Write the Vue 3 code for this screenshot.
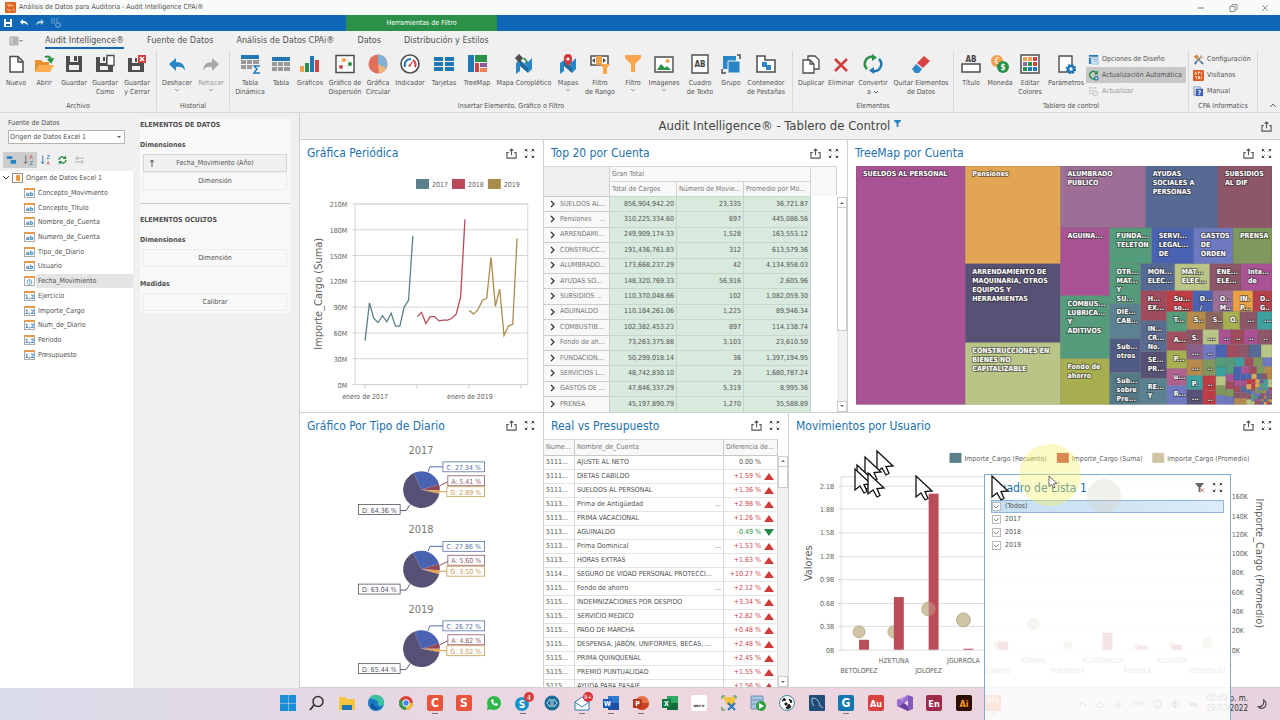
<template>
  <div class="app">
    <header class="titlebar">
      <svg class="logo" viewBox="0 0 12 12" v-html="icons.logo"></svg>
      <span class="app-title">Análisis de Datos para Auditoria - Audit Intelligence CPAi®</span>
      <div class="win-buttons">
        <button v-for="w in ['min', 'restore', 'close']" :key="w" :aria-label="w">
          <svg viewBox="0 0 10 10" v-html="icons[w]"></svg>
        </button>
      </div>
    </header>

    <div class="quickbar">
      <button v-for="q in ['qsave', 'qundo', 'qredo', 'qgrid']" :key="q" :aria-label="q">
        <svg viewBox="0 0 10 10" v-html="icons[q]"></svg>
      </button>
      <span class="context-tab">Herramientas de Filtro</span>
    </div>

    <nav class="tabs">
      <button class="file-tab" aria-label="file">
        <svg viewBox="0 0 14 10" v-html="icons.file"></svg>
      </button>
      <button v-for="(t, i) in tabs" :key="t" class="tab" :class="{ active: i === activeTab }" @click="activeTab = i">{{ t }}</button>
    </nav>

    <section class="ribbon">
      <div v-for="g in groups" :key="g.name" class="group">
        <div class="group-body" :class="g.id">
          <button v-for="b in g.items" :key="b.icon" class="big" :class="{ off: b.off }">
            <svg viewBox="0 0 20 20" v-html="icons[b.icon]"></svg>
            <span>{{ b.text }}<svg v-if="b.inline" class="chev" viewBox="0 0 6 4"><path d="M1 1l2 2 2-2" fill="none" stroke="#666" /></svg></span>
            <svg v-if="b.drop" class="chev" viewBox="0 0 6 4"><path d="M1 1l2 2 2-2" fill="none" stroke="#999" /></svg>
          </button>
          <div v-if="g.small" class="small-list">
            <button v-for="s in g.small" :key="s.text" class="small" :class="{ pressed: s.pressed, off: s.off }">
              <svg viewBox="0 0 12 12" v-html="icons[s.icon]"></svg>{{ s.text }}
            </button>
          </div>
        </div>
        <div class="group-name">{{ g.name }}</div>
      </div>
      <button class="collapse" aria-label="collapse">
        <svg viewBox="0 0 8 6"><path d="M1 5l3-3 3 3" fill="none" stroke="#666" /></svg>
      </button>
    </section>

    <main class="work">
      <aside class="source">
        <label for="origin">Fuente de Datos</label>
        <div class="select-box">
          <select id="origin"><option>Origen de Datos Excel 1</option></select>
          <svg viewBox="0 0 6 4"><path d="M1 1h4L3 3z" fill="#555" /></svg>
        </div>
        <div class="tree-tools">
          <button v-for="(t, i) in ['group', 'az', 'za', 'refresh', 'swap']" :key="t" :class="{ on: i < 2 }" :aria-label="t">
            <svg viewBox="0 0 12 12" v-html="icons[t]"></svg>
          </button>
        </div>
        <div class="tree">
          <ul>
            <li class="root">
              <svg class="exp" viewBox="0 0 8 6"><path d="M1 1l3 3 3-3" fill="none" stroke="#444" /></svg>
              <svg class="field" viewBox="0 0 11 10" v-html="icons.db"></svg>
              <span>Origen de Datos Excel 1</span>
            </li>
            <li v-for="f in fields" :key="f.name" :class="{ selected: f.type === 'date' }">
              <svg class="field" viewBox="0 0 11 10">
                <rect x=".5" y=".5" width="10" height="9" fill="#fff" stroke="#aaa" />
                <rect width="11" height="2" fill="#e59a4c" />
                <g v-if="f.type === 'date'" fill="none" stroke="#4a8dbb" stroke-width=".8"><circle cx="5.5" cy="6" r="2.4" /><path d="M5.5 4.5v1.7h1.3" /></g>
                <text v-else x="5.5" y="8" text-anchor="middle" font-size="6" font-weight="bold" fill="#3484b8">{{ f.type }}</text>
              </svg>
              <span>{{ f.name }}</span>
            </li>
          </ul>
        </div>
      </aside>

      <aside class="bindings">
        <div class="card">
          <h4>ELEMENTOS DE DATOS</h4>
          <h5>Dimensiones</h5>
          <button class="slot filled"><svg viewBox="0 0 6 8"><path d="M3 8V1M1 3l2-2 2 2" fill="none" stroke="#555" /></svg>Fecha_Movimiento (Año)</button>
          <button class="slot">Dimensión</button>
          <hr />
          <h4>ELEMENTOS OCULTOS</h4>
          <h5>Dimensiones</h5>
          <button class="slot">Dimensión</button>
          <h5 class="measures">Medidas</h5>
          <button class="slot">Calibrar</button>
        </div>
      </aside>

      <section class="dashboard">
        <div class="dash-title">
          <h1>Audit Intelligence® - Tablero de Control</h1>
          <svg class="funnel" viewBox="0 0 8 8"><path d="M0 0h8v1L5 4v4H3V4L0 1z" fill="#2a86c4" /></svg>
          <button class="tool" aria-label="export"><svg viewBox="0 0 12 12" v-html="icons.export"></svg></button>
        </div>

        <div class="row top">
          <article class="panel">
            <div class="panel-head">
              <h2>Gráfica Periódica</h2>
              <button v-for="t in tools" :key="t" class="tool" :aria-label="t"><svg viewBox="0 0 12 12" v-html="icons[t]"></svg></button>
            </div>
            <svg class="chart" viewBox="0 0 243 246">
              <g v-for="(s, i) in series" :key="s.year">
                <rect :x="116 + i * 36" y="13" width="13" height="10" :fill="s.color" />
                <text :x="132 + i * 36" y="21">{{ s.year }}</text>
              </g>
              <rect x="55" y="38" width="173" height="181" fill="none" stroke="#d2d2d2" />
              <g v-for="n in 8" :key="n">
                <path :d="`M52 ${lineY((n - 1) * 30)}H228`" stroke="#d6d6d6" />
                <text x="47" :y="lineY((n - 1) * 30) + 3" text-anchor="end">{{ (n - 1) * 30 }}M</text>
              </g>
              <path v-for="n in 4" :key="'t' + n" :d="`M${13 + n * 52} 219v4`" stroke="#ccc" />
              <polyline v-for="s in series" :key="s.color" :points="linePoints(s)" fill="none" :stroke="s.color" stroke-width="1.3" />
              <text x="65" y="233" text-anchor="middle">enero de 2017</text>
              <text x="170" y="233" text-anchor="middle">enero de 2019</text>
              <text class="axis" transform="translate(22 128) rotate(-90)" text-anchor="middle">Importe_Cargo (Suma)</text>
            </svg>
          </article>

          <article class="panel">
            <div class="panel-head">
              <h2>Top 20 por Cuenta</h2>
              <button v-for="t in tools" :key="t" class="tool" :aria-label="t"><svg viewBox="0 0 12 12" v-html="icons[t]"></svg></button>
            </div>
            <div class="grid-wrap">
              <table class="pivot">
                <colgroup><col class="c-name" /><col class="c-num" /><col class="c-num" /><col class="c-num" /><col /></colgroup>
                <thead>
                  <tr><th rowspan="2" class="corner"></th><th colspan="3">Gran Total</th><th rowspan="2"></th></tr>
                  <tr><th>Total de Cargos</th><th>Número de Movie...</th><th>Promedio por Mo...</th></tr>
                </thead>
                <tbody>
                  <tr v-for="r in top20" :key="r[0]">
                    <td class="name"><svg viewBox="0 0 5 8"><path d="M1 1l3 3-3 3" fill="none" stroke="#333" stroke-width="1.3" /></svg>{{ r[0] }}</td>
                    <td class="num">{{ r[1] }}</td>
                    <td class="num">{{ r[2] }}</td>
                    <td class="num">{{ r[3] }}</td>
                    <td></td>
                  </tr>
                </tbody>
              </table>
              <div class="scroll"><i class="up"></i><b class="long"></b><i class="down"></i></div>
            </div>
          </article>

          <article class="panel">
            <div class="panel-head">
              <h2>TreeMap por Cuenta</h2>
              <button v-for="t in tools" :key="t" class="tool" :aria-label="t"><svg viewBox="0 0 12 12" v-html="icons[t]"></svg></button>
            </div>
            <svg class="treemap" viewBox="0 0 415 239" preserveAspectRatio="none">
              <g v-for="(t, i) in tiles" :key="i">
                <rect :x="t[0]" :y="t[1]" :width="t[2]" :height="t[3]" :fill="t[4]" stroke="#333" stroke-opacity=".25" stroke-width=".6" />
                <text v-for="(line, k) in (t[5] ? t[5].split('|') : [])" :key="k" :x="t[0] + (t[3] < 17 ? 5 : 7)" :y="t[1] + 10 + k * 9">{{ line }}</text>
              </g>
            </svg>
          </article>
        </div>

        <div class="row bottom">
          <article class="panel">
            <div class="panel-head">
              <h2>Gráfico Por Tipo de Diario</h2>
              <button v-for="t in tools" :key="t" class="tool" :aria-label="t"><svg viewBox="0 0 12 12" v-html="icons[t]"></svg></button>
            </div>
            <svg class="chart" viewBox="0 0 243 250">
              <g v-for="(p, i) in pies" :key="p.year" :transform="`translate(0 ${i * 80})`">
                <text class="pie-title" x="121" y="15" text-anchor="middle">{{ p.year }}</text>
                <path v-for="s in pieSlices(p)" :key="s.color" :d="s.d" :fill="s.color" />
                <g fill="none">
                  <path d="M128 33l2-5h13" stroke="#5470a8" />
                  <path d="M140 47l8-4" stroke="#8e5669" />
                  <path d="M140 53h7" stroke="#c79a52" />
                  <path d="M110 66l-4 6h-7" stroke="#575175" />
                </g>
                <g v-for="l in pieLabels" :key="l.key">
                  <rect :x="l.x" :y="l.y" :width="l.w" height="10" fill="#fff" :stroke="l.color" stroke-width=".8" />
                  <text :x="l.x + l.w / 2" :y="l.y + 8" text-anchor="middle" :fill="l.color">{{ l.key }}: {{ p[l.key] }} %</text>
                </g>
              </g>
            </svg>
          </article>

          <article class="panel">
            <div class="panel-head">
              <h2>Real vs Presupuesto</h2>
              <button v-for="t in tools" :key="t" class="tool" :aria-label="t"><svg viewBox="0 0 12 12" v-html="icons[t]"></svg></button>
            </div>
            <div class="grid-wrap">
              <table class="budget">
                <colgroup><col class="c-id" /><col /><col class="c-diff" /></colgroup>
                <thead><tr><th>Nume...</th><th>Nombre_de_Cuenta</th><th>Diferencia de...</th></tr></thead>
                <tbody>
                  <tr v-for="r in budget" :key="r[1]">
                    <td>{{ r[0] }}...</td>
                    <td><div class="cell"><span>{{ r[1] }}</span><span v-if="r[3]">...</span></div></td>
                    <td class="diff" :class="r[2][0] === '+' ? 'bad' : r[2][0] === '-' ? 'good' : ''">
                      {{ r[2] }} %<i></i>
                    </td>
                  </tr>
                </tbody>
              </table>
              <div class="scroll from-head"><i class="up"></i><b></b><i class="down"></i></div>
            </div>
          </article>

          <article class="panel">
            <div class="panel-head">
              <h2>Movimientos por Usuario</h2>
              <button v-for="t in tools" :key="t" class="tool" :aria-label="t"><svg viewBox="0 0 12 12" v-html="icons[t]"></svg></button>
            </div>
            <svg class="chart" viewBox="0 0 491 250">
              <g v-for="l in comboLegend" :key="l.text">
                <rect :x="l.x" y="14" width="12" height="10" :fill="l.color" />
                <text :x="l.x + 15" y="22">{{ l.text }}</text>
              </g>
              <path d="M51 38H442M51 38V212" stroke="#ddd" fill="none" />
              <g v-for="(v, i) in ['0B', '0.3B', '0.6B', '0.9B', '1.2B', '1.5B', '1.8B', '2.1B']" :key="v">
                <path :d="`M48 ${212 - Math.round(i * 23.6)}.5H442`" stroke="#ddd" />
                <text x="44" :y="215 - Math.round(i * 23.6)" text-anchor="end">{{ v }}</text>
              </g>
              <text v-for="n in 9" :key="n" x="444" :y="234 - Math.round(n * 19.3)">{{ (n - 1) * 20 }}K</text>
              <g v-for="(u, i) in users" :key="u.name">
                <circle :cx="69 + i * 35" :cy="u.cy" :r="u.r" fill="#cfc4a3" stroke="#b8ad8c" />
                <rect :x="69 + i * 35" :y="212 - u.bar" width="10" :height="u.bar" fill="#ba4d5a" />
                <text :x="69 + i * 35" :y="i % 2 ? 225 : 235" text-anchor="middle">{{ u.name }}</text>
              </g>
              <circle cx="139" cy="171" r="7" fill="#cfc4a3" fill-opacity=".35" />
              <text class="axis" transform="translate(22 125) rotate(-90)" text-anchor="middle">Valores</text>
              <text class="axis" transform="translate(468 125) rotate(90)" text-anchor="middle">Importe_Cargo (Promedio)</text>
            </svg>
          </article>
        </div>
      </section>
    </main>

    <footer class="taskbar">
      <div class="apps">
        <button v-for="(a, i) in apps" :key="i" :class="{ running: a[3] }" :aria-label="'app ' + i">
          <svg viewBox="0 0 16 16">
            <g v-if="icons[a[0]]" v-html="icons[a[0]]"></g>
            <template v-else>
              <rect width="16" height="16" rx="2" :fill="a[1]" />
              <text x="8" y="12" text-anchor="middle" :font-size="a[0].length > 2 ? 4 : a[0].length > 1 ? 9 : 12" font-weight="bold" :fill="a[2]">{{ a[0] }}</text>
            </template>
          </svg>
        </button>
      </div>
      <div class="tray">
        <svg viewBox="0 0 8 8"><path d="M1 5l3-3 3 3" fill="none" stroke="#555" /></svg>
        <svg viewBox="0 0 10 8"><path d="M3 7a2 2 0 010-4 3 3 0 015 1 1.5 1.5 0 010 3z" fill="none" stroke="#555" /></svg>
        <svg viewBox="0 0 8 10"><rect x="3" y="1" width="2" height="5" rx="1" fill="none" stroke="#555" /><path d="M1 4a3 3 0 006 0M4 7v2" fill="none" stroke="#555" /></svg>
        <span>ESP</span>
        <svg viewBox="0 0 10 10"><path d="M1 1h8v6H1zM3 9h4" fill="none" stroke="#555" /></svg>
        <svg viewBox="0 0 8 8"><path d="M1 3h1l2-2v6L2 5H1zM6 2q2 2 0 4" fill="none" stroke="#555" /></svg>
        <svg viewBox="0 0 10 8"><path d="M1 2h8v4H1z" fill="#666" /></svg>
        <time>02:49 p. m.<br />29/03/2022</time>
        <svg class="moon" viewBox="0 0 10 10"><path d="M6 1a4 4 0 11-5 6q6 0 5-6z" fill="none" stroke="#444" /></svg>
      </div>
    </footer>

    <!-- floating list box that is being dragged over the dashboard -->
    <div class="listbox">
      <div class="panel-head">
        <h2>Cuadro de Lista 1</h2>
        <button class="tool" aria-label="clear"><svg viewBox="0 0 12 12" v-html="icons.clear"></svg></button>
        <button class="tool" aria-label="max"><svg viewBox="0 0 12 12" v-html="icons.max"></svg></button>
      </div>
      <label v-for="(o, i) in options" :key="o" :class="{ current: i === 0 }">
        <input v-model="checked" type="checkbox" :value="o" /><span>{{ o }}</span>
      </label>
    </div>

    <svg class="pointer-trail" viewBox="0 0 240 90">
      <circle cx="200" cy="30" r="31" fill="#f7f36b" fill-opacity=".4" />
      <circle cx="254" cy="51" r="17" fill="#cfc8b4" fill-opacity=".28" />
      <path v-for="c in cursors" :key="c.join()" :transform="`translate(${c[0]} ${c[1]})`" d="M0 0v21l5-4 4 7 3-1.5-3-7 7-.5z" fill="#fff" stroke="#111" stroke-width="1.3" />
      <path transform="translate(199 31) scale(.5)" d="M0 0v21l5-4 4 7 3-1.5-3-7 7-.5z" fill="#fff" stroke="#444" stroke-width="1.6" />
    </svg>
  </div>
</template>

<script setup>
import { ref } from 'vue';

const activeTab = ref(0);
const tabs = ['Audit Intelligence®', 'Fuente de Datos', 'Análisis de Datos CPAi®', 'Datos', 'Distribución y Estilos'];
const tools = ['export', 'max'];

const options = ['(Todos)', '2017', '2018', '2019'];
const checked = ref([...options]);

const table = '<path d="M1 1h18v4H1z" fill="#2178b5"/><path d="M1 6h5v4H1zM7 6h5v4H7zM13 6h6v4h-6zM1 11h5v4H1zM7 11h5v4H7z" fill="#9a9a9a"/>';
const map = '<path d="M2 9l4-3v11l-4 3zM14 8l4-4v11l-4 4z" fill="#2a86c4"/><path d="M6 6l8 7v6L6 12z" fill="#1c6a9e"/><path d="M10 9l4-2v6z" fill="#2a86c4"/>';
const floppy = '<path d="M2 2h16v16H2z" fill="#4d4d4d"/><path d="M6 2h8v6H6zM5 11h10v5H5z" fill="#f0f0f0"/><path d="M10 2h3v5h-3z" fill="#4d4d4d"/>';
const undo = 'M2 10l7-6v4q9 0 9 9-2-5-9-4v4z';

const icons = {
  logo: '<rect width="12" height="12" rx="1" fill="#e0641f"/><path d="M2 3h2v2M5 5V3h2v2M9 3v2M2 8h2v2M6 8v2M8 8h2v2" fill="none" stroke="#ffe1c8" stroke-width=".8"/>',
  min: '<path d="M2 5h6" stroke="#777"/>',
  restore: '<path d="M2 3.5h5v5H2zM4 3V1.5h5v5H7.5" fill="none" stroke="#777" stroke-width=".8"/>',
  close: '<path d="M2 2l6 6M8 2l-6 6" stroke="#777" stroke-width=".8"/>',
  qsave: '<path d="M1 1h8v8H1z" fill="#fff"/><path d="M3 1h4v3H3zM3 6h4v2H3z" fill="#0f67b5"/>',
  qundo: '<path d="M1 4l3-3v2q5 0 5 5-1-3-5-3v2z" fill="#fff"/>',
  qredo: '<path d="M9 4L6 1v2q-5 0-5 5 1-3 5-3v2z" fill="#b6d3ea"/>',
  qgrid: '<path d="M0 1h8M0 3h7M0 5h4" stroke="#87b5da" stroke-dasharray="1.5 1"/><circle cx="7" cy="7" r="2.3" fill="none" stroke="#87b5da"/>',
  file: '<path d="M1 1h8v8H1z" fill="#ccc" stroke="#999" stroke-width=".8"/><path d="M4 3h4M4 5h4M4 7h4" stroke="#888" stroke-width=".7"/><path d="M10 4h4l-2 2z" fill="#888"/>',
  nuevo: '<path d="M4 2.5h8l5 5V18H4zM12 2.5V8h5" fill="#fff" stroke="#4d4d4d" stroke-width="1.5"/>',
  abrir: '<path d="M1 6h6l2 2h6v3H5l-4 7z" fill="#e8902f"/><path d="M5 11h15l-4 7H1z" fill="#fbae52"/><path d="M11 3q5-2 6 3M14 5l3 3 2-4" fill="none" stroke="#2b9149" stroke-width="2"/>',
  guardar: floppy,
  como: '<path d="M1 3h17v15H1z" fill="#4d4d4d"/><path d="M5 3h6v6H5zM5 12h8v4H5z" fill="#f0f0f0"/><path d="M8 3h2v4H8z" fill="#4d4d4d"/><path d="M12 1.5h7v10h-7z" fill="#fff" stroke="#4d4d4d" stroke-width="1.3"/>',
  cerrar: '<path d="M1 4h16v14H1z" fill="#4d4d4d"/><path d="M5 4h6v5H5zM5 12h8v4H5z" fill="#f0f0f0"/><path d="M8 4h2v4H8z" fill="#4d4d4d"/><path d="M11 1h8v8h-8z" fill="#d33b3b"/><path d="M13 3l4 4M17 3l-4 4" stroke="#fff" stroke-width="1.5"/>',
  deshacer: `<path d="${undo}" fill="#2a86c4"/>`,
  rehacer: `<path d="${undo}" fill="#a8a8a8" transform="matrix(-1 0 0 1 20 0)"/>`,
  dinamica: table + '<path d="M20 12h-6l3 3-3 4h6" fill="none" stroke="#2178b5" stroke-width="1.5"/>',
  tabla: '<path d="M1 3h18v4H1z" fill="#2178b5"/><path d="M1 8h5v4H1zM7 8h5v4H7zM13 8h6v4h-6zM1 13h5v4H1zM7 13h5v4H7zM13 13h6v4h-6z" fill="#9a9a9a"/>',
  graficos: '<path d="M0 12h4v6H0z" fill="#f0a04a"/><path d="M5 9h4v9H5z" fill="#2b9149"/><path d="M10 2h4v16h-4z" fill="#2178b5"/><path d="M15 6h4v12h-4z" fill="#d04545"/>',
  dispersion: '<path d="M1 1.5h18v17H1z" fill="#fff" stroke="#4d4d4d" stroke-width="1.5"/><path d="M1 7h18M1 12h18M7 2v16M13 2v16" stroke="#ccc" stroke-width=".6"/><circle cx="9" cy="6" r="2" fill="#f0a04a"/><circle cx="6" cy="13" r="2" fill="#d04545"/><circle cx="15" cy="10" r="2" fill="#2b9149"/>',
  pie: '<circle cx="10" cy="10" r="9.5" fill="#e2705e"/><path d="M10 10V.5a9.5 9.5 0 018 14z" fill="#7fb3d8"/><path d="M10 10l8 4a9 9 0 01-7 5z" fill="#f0b878"/>',
  indicador: '<circle cx="10" cy="10" r="9" fill="#fff" stroke="#4d4d4d" stroke-width="1.6"/><path d="M5 13a6 6 0 016-8" fill="none" stroke="#2178b5" stroke-width="2"/><path d="M13 6a6 6 0 012 7" fill="none" stroke="#d33b3b" stroke-width="2"/><path d="M8 12l6-6-4 7z" fill="#d33b3b"/>',
  tarjetas: '<path d="M0 3h9v4H0zM11 3h9v4h-9zM0 8h9v4H0zM11 8h9v4h-9zM0 13h9v4H0zM11 13h9v4h-9z" fill="#2178b5"/>',
  treemap: '<path d="M1 1h6v17H1z" fill="#2178b5"/><path d="M8 1h12v7H8z" fill="#2b9149"/><path d="M8 9h4v9H8z" fill="#d04545"/><path d="M13 9h7v4h-7z" fill="#8a5a9a"/><path d="M13 14h7v4h-7z" fill="#f0805a"/>',
  coropletico: map + '<path d="M5 0l4 4-4 5-4-5z" fill="#4d4d4d"/><path d="M9 5q3-1 4 4" fill="none" stroke="#2b9149" stroke-width="1.5"/>',
  mapas: map + '<path d="M10 12q-5-5-4-8a4 4 0 018 0q1 3-4 8z" fill="#d33b3b"/><circle cx="10" cy="5" r="1.6" fill="#fff"/>',
  rango: '<path d="M1 2h17v9H1z" fill="#fff" stroke="#4d4d4d" stroke-width="1.5"/><path d="M6 2h6v9H6z" fill="#f0a04a"/><path d="M5 4v5L2 6.5zM13 4v5l3-2.5z" fill="#4d4d4d"/><path d="M10 10h10l-3 4v6h-4v-6z" fill="#fba64a"/>',
  filtro: '<path d="M2 1h16v3l-6 6v8H8v-8L2 4z" fill="#fba64a"/>',
  imagenes: '<path d="M1 3h18v15H1z" fill="#fff" stroke="#4d4d4d" stroke-width="1.4"/><path d="M3 16l4-6 4 4 2-2 4 4z" fill="#2b9149"/><circle cx="13.5" cy="7" r="2" fill="#f0a04a"/>',
  texto: '<path d="M2 1h16v18H2z" fill="#fff" stroke="#4d4d4d" stroke-width="1.4"/><text x="10" y="13" text-anchor="middle" font-size="8" font-weight="bold" fill="#444">AB</text>',
  grupo: '<path d="M2 2h13v13H2z" fill="#2a86c4"/><path d="M7 7h12v12H7z" fill="#2a86c4" stroke="#f0f0f0"/><path d="M16 1h3v4M1 15v4h4" fill="none" stroke="#4d4d4d" stroke-width="1.5"/>',
  contenedor: '<path d="M1 2h8v4h10v12H1z" fill="#fff" stroke="#4d4d4d" stroke-width="1.5"/><path d="M6 8h5v5H6zM10 11h5v5h-5z" fill="#2a86c4"/>',
  duplicar: '<path d="M7 2h7l4 4v9H7z" fill="#fff" stroke="#4d4d4d" stroke-width="1.3"/><path d="M2 6h7l4 4v9H2zM9 6v4h4" fill="#fff" stroke="#4d4d4d" stroke-width="1.3"/>',
  eliminar: '<path d="M4 5l12 12M16 5L4 17" stroke="#d33b3b" stroke-width="2.5"/>',
  convertir: '<path d="M4 15a7 7 0 016-12" fill="none" stroke="#2b9149" stroke-width="2.5"/><path d="M9 0l5 3.5L9 7z" fill="#2b9149"/><path d="M16 5a7 7 0 01-6 12" fill="none" stroke="#2178b5" stroke-width="2.5"/><path d="M11 20l-5-3.5 5-3.5z" fill="#2178b5"/>',
  quitar: '<path d="M13 2l6 5-7 7-6-5z" fill="#d84444"/><path d="M5 10l6 5-3 4H4l-3-4z" fill="#2a86c4"/>',
  titulo: '<text x="10" y="8" text-anchor="middle" font-size="8" font-weight="bold" fill="#444">AB</text><path d="M1 10h18v8H1z" fill="#fff" stroke="#4d4d4d" stroke-width="1.5"/>',
  moneda: '<circle cx="7" cy="7" r="6" fill="#f0a04a"/><text x="7" y="10" text-anchor="middle" font-size="8" fill="#fff">€</text><circle cx="13" cy="13" r="6" fill="#2b9149"/><text x="13" y="16" text-anchor="middle" font-size="8" font-weight="bold" fill="#fff">$</text>',
  colores: '<path d="M1 1h18v18H1z" fill="#fff" stroke="#4d4d4d" stroke-width="1.5"/><path d="M3 3h4v4H3zM8 3h4v4H8z" fill="#f0a04a"/><path d="M13 3h4v4h-4z" fill="#d04545"/><path d="M3 8h4v4H3z" fill="#8a6aa0"/><path d="M8 8h4v4H8zM3 13h4v4H3z" fill="#2b9149"/><path d="M13 8h4v4h-4z" fill="#d04545"/><path d="M8 13h4v4H8zM13 13h4v4h-4z" fill="#2178b5"/>',
  parametros: '<path d="M3 2h13v16H3z" fill="#fff" stroke="#4d4d4d" stroke-width="1.4"/><circle cx="15" cy="15" r="3" fill="#f0f0f0" stroke="#2178b5" stroke-width="2.5"/><circle cx="15" cy="15" r="4.5" fill="none" stroke="#2178b5" stroke-width="1.5" stroke-dasharray="2 1.5"/>',
  diseno: '<path d="M1 1h10v2H1zM1 4h2v7H1z" fill="#2178b5"/><path d="M4 4h7v7H4z" fill="#dcebf5" stroke="#7aa9cc" stroke-width=".7"/><path d="M6 6h4M6 8h4" stroke="#7aa9cc"/>',
  auto: '<path d="M9 3a4 4 0 10-1 6M10 1v3H7" fill="none" stroke="#2b9149" stroke-width="1.6"/><circle cx="9" cy="9" r="2" fill="none" stroke="#2178b5" stroke-width="1.2"/>',
  actualizar: '<path d="M1 2h9M1 5h6M1 8h4" stroke="#bbb" stroke-width="1.5" stroke-dasharray="2 1"/><circle cx="8" cy="8" r="2.5" fill="none" stroke="#bbb"/>',
  config: '<path d="M2 10l7-7M3 3l7 7" stroke="#888" stroke-width="1.8"/><path d="M1 3l3-2 2 2-2 2zM8 1l3 3" fill="#e08a3f" stroke="#e08a3f"/><path d="M2 11l2-2M9 9l2 2" stroke="#4477aa" stroke-width="1.8"/>',
  visitanos: '<rect width="12" height="12" rx="1" fill="#de5b22"/><path d="M2 5l1-3 1 3M6 5V2h1v1M9 2v3M2 7h2v3M6 10V7h1v3M9 7v3" fill="none" stroke="#fff" stroke-width=".8"/>',
  manual: '<path d="M1 1h7v9H1z" fill="#dfe6f2" stroke="#8a99b5"/><path d="M3 3h8v8H3z" fill="#3f62b5"/><text x="7" y="10" text-anchor="middle" font-size="7" font-weight="bold" fill="#fff">?</text>',
  group: '<path d="M1 2h6v3H1zM5 6h6v4H5z" fill="#2a86c4"/>',
  az: '<path d="M3 1v9M1 8l2 2 2-2" fill="none" stroke="#666"/><text x="9" y="5" text-anchor="middle" font-size="6" fill="#c44">A</text><text x="9" y="11" text-anchor="middle" font-size="6" fill="#2178b5">Z</text>',
  za: '<path d="M3 1v9M1 8l2 2 2-2" fill="none" stroke="#2178b5"/><text x="9" y="5" text-anchor="middle" font-size="6" fill="#2178b5">Z</text><text x="9" y="11" text-anchor="middle" font-size="6" fill="#c44">A</text>',
  refresh: '<path d="M2 6a4 4 0 017-2M10 6a4 4 0 01-7 2" fill="none" stroke="#2b9149" stroke-width="1.5"/><path d="M10 1v4H6zM2 11V7h4z" fill="#2b9149"/>',
  swap: '<path d="M11 4H2M4 2L2 4l2 2M1 8h9M8 6l2 2-2 2" fill="none" stroke="#aaa"/>',
  db: '<rect x=".5" y=".5" width="10" height="9" fill="#fff" stroke="#a08a78"/><rect x="4" y="2" width="4" height="6" rx="1" fill="#ef9b3c"/>',
  export: '<path d="M3 5H1v6h10V5H9M6 8V1M4 3l2-2 2 2" fill="none" stroke="#555" stroke-width="1.2"/>',
  max: '<path d="M1 1h3L1 4zM8 1h3v3zM11 8v3H8zM4 11H1V8z" fill="#444"/><path d="M2 2l2 2M10 2L8 4M10 10L8 8M2 10l2-2" stroke="#555"/>',
  clear: '<path d="M1 1h10L7 6v5H5V6z" fill="#666"/><path d="M7 7l4 4M11 7l-4 4" stroke="#d66"/>',
  win: '<path d="M0 0h8v8H0zM8.5 0H16v8H8.500zM0 8.500h8V16H0zM8.500 8.500H16V16H8.500z" fill="#1b8ed8"/>',
  search: '<circle cx="9" cy="6.5" r="5" fill="none" stroke="#333" stroke-width="1.5"/><path d="M5 10l-4 5" stroke="#333" stroke-width="1.8"/>',
  folder: '<path d="M0 2h6l2 2h8v11H0z" fill="#f5c542"/><path d="M3 10h10v5H3z" fill="#2277b8"/>',
  edge: '<circle cx="8" cy="8" r="8" fill="#1878c4"/><path d="M1 4a8 8 0 0115 4q0 3-4 3-3-1-2-4-3-4-9-3z" fill="#3fc0a0"/><path d="M5 8q0 5 6 5-5 3-8-1-1-3 2-4z" fill="#0c4f96"/>',
  chrome: '<circle cx="8" cy="8" r="7" fill="#dc4437"/><path d="M8 8L2 4.5A7 7 0 008 15z" fill="#2f9e54"/><path d="M8 8h7a7 7 0 01-7 7z" fill="#f3c02d"/><circle cx="8" cy="8" r="3.3" fill="#4583e6" stroke="#fff"/>',
  whatsapp: '<circle cx="8" cy="8" r="7" fill="#2eb84b"/><path d="M1 15l1-5 4 4z" fill="#2eb84b"/><path d="M5 5q0 5 6 6l1-2-2-1-1 1-2-2 1-1-1-2z" fill="#fff"/>',
  skype: '<circle cx="7" cy="9" r="7" fill="#1592c8"/><text x="7" y="13" text-anchor="middle" font-size="10" font-weight="bold" fill="#fff">S</text><circle cx="14" cy="2" r="5" fill="#d83b3b"/><text x="14" y="5" text-anchor="middle" font-size="7" fill="#fff">4</text>',
  code: '<circle cx="8" cy="8" r="7.5" fill="#1d6a97"/><path d="M6 4L3 8l3 4M10 4l3 4-3 4M7 4v8M9 4v8" fill="none" stroke="#bfe0ee"/>',
  mail: '<path d="M1 7l7-5 7 5v8H1z" fill="#fff" stroke="#2b7fb5"/><path d="M1 7l7 5 7-5" fill="none" stroke="#2b7fb5"/><circle cx="14" cy="2" r="5" fill="#d32f35"/><text x="14" y="4" text-anchor="middle" font-size="6" fill="#fff">9+</text>',
  word: '<path d="M5 1h11v14H5z" fill="#2f7bd0"/><path d="M5 8h11v7H5z" fill="#1b4fa0"/><path d="M0 4h9v9H0z" fill="#185abd"/><text x="4.5" y="11" text-anchor="middle" font-size="7" font-weight="bold" fill="#fff">W</text>',
  ppt: '<circle cx="9" cy="8" r="7" fill="#e8704a"/><path d="M2 8h14a7 7 0 01-14 0z" fill="#c8452a"/><path d="M0 4h9v9H0z" fill="#b9381c"/><text x="4.5" y="11" text-anchor="middle" font-size="7" font-weight="bold" fill="#fff">P</text>',
  excel: '<path d="M5 1h11v14H5z" fill="#2fa866"/><path d="M5 8h11v7H5z" fill="#166b3c"/><path d="M0 4h9v9H0z" fill="#107c41"/><text x="4.5" y="11" text-anchor="middle" font-size="7" font-weight="bold" fill="#fff">X</text>',
  toolsapp: '<path d="M2 2h12v8H6z" fill="#f2c440"/><path d="M1 4V1h3M12 1h3v3M1 12v3h3" fill="none" stroke="#2b9149"/><path d="M7 8l7 7M14 8l-7 7" stroke="#2a76b5" stroke-width="2"/>',
  server: '<path d="M1 1h12v13H1z" fill="#a9c6e0" stroke="#6f93b5"/><path d="M1 5h12M1 9h12" stroke="#6f93b5"/><circle cx="11" cy="11" r="5" fill="#2fa33f"/><path d="M9 8l5 3-5 3z" fill="#fff"/>',
  panda: '<circle cx="8" cy="8" r="7.5" fill="#fff" stroke="#3c8c94"/><path d="M3 6l2-3 2 2zM10 4l3 2-1 2zM6 8h2v2H6zM10 9l2 3-3 2-2-1z" stroke="#222" fill="#222"/>',
  mysql: '<rect width="16" height="16" rx="1" fill="#1f4d75"/><path d="M3 3q7 0 8 8l3 2M3 3v5l2 3" fill="none" stroke="#9cc3dd"/>',
  vs: '<path d="M11 0l5 2v12l-5 2-8-8zM11 5L7 8l4 3z" fill="#8458b8" fill-rule="evenodd"/><path d="M0 5l2-1 9 8v4L0 11z" fill="#6a3fa0"/><path d="M0 11l2 1 9-8V0L0 5z" fill="#a379d6" fill-opacity=".8"/>',
  apa: '<rect width="16" height="16" rx="1" fill="#e0641f"/><path d="M2 7l2-4 1 4M7 7V3h2v2M12 3v4" fill="none" stroke="#fff"/>'
};

const groups = [
  { name: 'Archivo', id: 'g-file', items: [
    { icon: 'nuevo', text: 'Nuevo' }, { icon: 'abrir', text: 'Abrir' }, { icon: 'guardar', text: 'Guardar' },
    { icon: 'como', text: 'Guardar\nComo' }, { icon: 'cerrar', text: 'Guardar\ny Cerrar' }
  ] },
  { name: 'Historial', id: 'g-history', items: [
    { icon: 'deshacer', text: 'Deshacer', drop: true }, { icon: 'rehacer', text: 'Rehacer', drop: true, off: true }
  ] },
  { name: 'Insertar Elemento, Gráfico o Filtro', id: 'g-insert', items: [
    { icon: 'dinamica', text: 'Tabla\nDinámica' }, { icon: 'tabla', text: 'Tabla' }, { icon: 'graficos', text: 'Gráficos' },
    { icon: 'dispersion', text: 'Gráfico de\nDispersión' }, { icon: 'pie', text: 'Gráfica\nCircular' },
    { icon: 'indicador', text: 'Indicador' }, { icon: 'tarjetas', text: 'Tarjetas' }, { icon: 'treemap', text: 'TreeMap' },
    { icon: 'coropletico', text: 'Mapa Coroplético' }, { icon: 'mapas', text: 'Mapas', drop: true },
    { icon: 'rango', text: 'Filtro\nde Rango' }, { icon: 'filtro', text: 'Filtro', drop: true },
    { icon: 'imagenes', text: 'Imágenes', drop: true }, { icon: 'texto', text: 'Cuadro\nde Texto' },
    { icon: 'grupo', text: 'Grupo' }, { icon: 'contenedor', text: 'Contenedor\nde Pestañas' }
  ] },
  { name: 'Elementos', id: 'g-items', items: [
    { icon: 'duplicar', text: 'Duplicar' }, { icon: 'eliminar', text: 'Eliminar' },
    { icon: 'convertir', text: 'Convertir\na ', inline: true }, { icon: 'quitar', text: 'Quitar Elementos\nde Datos' }
  ] },
  { name: 'Tablero de control', id: 'g-board', items: [
    { icon: 'titulo', text: 'Título' }, { icon: 'moneda', text: 'Moneda' },
    { icon: 'colores', text: 'Editar\nColores' }, { icon: 'parametros', text: 'Parámetros' }
  ], small: [
    { icon: 'diseno', text: 'Opciones de Diseño' },
    { icon: 'auto', text: 'Actualización Automática', pressed: true },
    { icon: 'actualizar', text: 'Actualizar', off: true }
  ] },
  { name: 'CPA Informatics', id: 'g-cpa', items: [], small: [
    { icon: 'config', text: 'Configuración' }, { icon: 'visitanos', text: 'Visítanos' }, { icon: 'manual', text: 'Manual' }
  ] }
];

const fields = [
  { name: 'Concepto_Movimiento', type: 'ab' }, { name: 'Concepto_Titulo', type: 'ab' },
  { name: 'Nombre_de_Cuenta', type: 'ab' }, { name: 'Numero_de_Cuenta', type: 'ab' },
  { name: 'Tipo_de_Diario', type: 'ab' }, { name: 'Usuario', type: 'ab' },
  { name: 'Fecha_Movimiento', type: 'date' }, { name: 'Ejercicio', type: '1,2' },
  { name: 'Importe_Cargo', type: '1,2' }, { name: 'Num_de_Diario', type: '1,2' },
  { name: 'Periodo', type: '1,2' }, { name: 'Presupuesto', type: '1,2' }
];

const series = [
  { year: 2017, color: '#5c8089', start: 0, data: [51, 95, 77, 72, 80, 73, 83, 68, 68, 90, 98, 173] },
  { year: 2018, color: '#b9485a', start: 12, data: [79, 84, 71, 79, 79, 74, 75, 75, 77, 82, 102, 192] },
  { year: 2019, color: '#ab8b4b', start: 24, data: [86, 82, 87, 98, 100, 148, 91, 111, 57, 68, 70, 170] }
];
const lineY = v => 219 - Math.round(v * 181 / 210 * 10) / 10;
const linePoints = s => s.data.map((v, i) => `${65 + (s.start + i) * 4.35},${lineY(v)}`).join(' ');

const top20 = [
  ['SUELDOS AL...', '856,904,942.20', '23,335', '36,721.87'],
  ['Pensiones    ...', '310,225,334.60', '697', '445,086.56'],
  ['ARRENDAMI...', '249,909,174.33', '1,528', '163,553.12'],
  ['CONSTRUCC...', '191,436,761.83', '312', '613,579.36'],
  ['ALUMBRADO...', '173,668,237.29', '42', '4,134,958.03'],
  ['AYUDAS SO...', '148,320,769.33', '56,916', '2,605.96'],
  ['SUBSIDIOS ...', '110,370,048.66', '102', '1,082,059.30'],
  ['AGUINALDO', '110,184,261.06', '1,225', '89,946.34'],
  ['COMBUSTIB...', '102,382,453.23', '897', '114,138.74'],
  ['Fondo de ah...', '73,263,375.88', '3,103', '23,610.50'],
  ['FUNDACION...', '50,299,018.14', '36', '1,397,194.95'],
  ['SERVICIOS L...', '48,742,830.10', '29', '1,680,787.24'],
  ['GASTOS DE ...', '47,846,337.29', '5,319', '8,995.36'],
  ['PRENSA', '45,197,890.79', '1,270', '35,588.89']
];

const budget = [
  ['5111', 'AJUSTE AL NETO', '0.00'], ['5111', 'DIETAS CABILDO', '+1.59'], ['5111', 'SUELDOS AL PERSONAL', '+1.36'],
  ['5113', 'Prima de Antigüedad', '+2.98', true], ['5113', 'PRIMA VACACIONAL', '+1.26'], ['5113', 'AGUINALDO', '-0.49'],
  ['5113', 'Prima Dominical', '+1.53', true], ['5113', 'HORAS EXTRAS', '+1.63'],
  ['5114', 'SEGURO DE VIDAD PERSONAL PROTECCI...', '+10.27'], ['5115', 'Fondo de ahorro', '+2.12', true],
  ['5115', 'INDEMNIZACIONES POR DESPIDO', '+3.34'], ['5115', 'SERVICIO MEDICO', '+2.82'],
  ['5115', 'PAGO DE MARCHA', '+0.48'], ['5115', 'DESPENSA, JABÓN, UNIFORMES, BECAS, ...', '+2.48'],
  ['5115', 'PRIMA QUINQUENAL', '+2.45'], ['5115', 'PREMIO PUNTUALIDAD', '+1.55'], ['5115', 'AYUDA PARA PASAJE', '+1.56']
];

// x, y, width, height, color, label lines
const tiles = [
  [0, 0, 109, 239, '#a95394', 'SUELDOS AL PERSONAL'],
  [109, 0, 95, 98, '#e1a553', 'Pensiones'],
  [109, 98, 95, 79, '#575175', 'ARRENDAMIENTO DE|MAQUINARIA, OTROS|EQUIPOS Y|HERRAMIENTAS'],
  [109, 177, 95, 62, '#b9c487', 'CONSTRUCCIONES EN|BIENES NO|CAPITALIZABLE'],
  [204, 0, 85, 62, '#9d6f97', 'ALUMBRADO|PUBLICO'],
  [289, 0, 72, 62, '#566a95', 'AYUDAS|SOCIALES A|PERSONAS'],
  [361, 0, 54, 62, '#8e5669', 'SUBSIDIOS|AL DIF'],
  [204, 62, 49, 68, '#a95394', 'AGUINA...'],
  [253, 62, 42, 36, '#549c7b', 'FUNDA...|TELETON'],
  [295, 62, 42, 36, '#4a62b2', 'SERVI...|LEGAL...|DE'],
  [337, 62, 39, 36, '#6f79c0', 'GASTOS|DE|ORDEN'],
  [376, 62, 39, 36, '#80975d', 'PRENSA'],
  [204, 130, 49, 63, '#549c7b', 'COMBUS...|LUBRICA...|Y|ADITIVOS'],
  [204, 193, 49, 46, '#a7af50', 'Fondo de|ahorro'],
  [253, 98, 31, 40, '#549c7b', 'OTR...|MAT...|Y|SU...'],
  [253, 138, 31, 35, '#5c8291', 'DIE...|CAB...'],
  [253, 173, 31, 34, '#515c86', 'Sub...|otros'],
  [253, 207, 31, 32, '#547a88', 'Sub...|sobre|Pre...'],
  [284, 98, 34, 27, '#566a95', 'MON...|ELEC...'],
  [318, 98, 35, 27, '#b9c487', 'MAT...|ELEC...'],
  [353, 98, 31, 27, '#8e5669', 'ENE...|ELE...'],
  [384, 98, 31, 27, '#a95394', 'Inte...|de'],
  [284, 125, 26, 30, '#a14b5e', 'H...|EX...'],
  [310, 125, 26, 21, '#c03c44', 'Su...|so...'],
  [336, 125, 20, 21, '#4a62b2', 'D...|/'],
  [356, 125, 20, 21, '#9d6f97', 'O..|M..'],
  [376, 125, 20, 21, '#eaa244', 'IN.|P...'],
  [396, 125, 19, 21, '#b5404c', 'D..|G..'],
  [310, 146, 20, 20, '#549c7b', 'T...'],
  [330, 146, 19, 18, '#b58a4b', 'S..'],
  [349, 146, 17, 18, '#8e6660', 'S..'],
  [366, 146, 17, 18, '#a7af50', 'O.'],
  [383, 146, 17, 18, '#8e5669', '...'],
  [400, 146, 15, 18, '#3fa0a0', '...'],
  [284, 155, 26, 31, '#5a6b90', 'IN...|CR...|No.'],
  [310, 166, 20, 19, '#a1505f', 'A...'],
  [330, 164, 16, 15, '#8e5669', 'S.'],
  [346, 164, 16, 15, '#b9c487', '...'],
  [362, 164, 12, 15, '#a95394', '..'],
  [374, 164, 13, 15, '#a14b5e', '..'],
  [387, 164, 14, 15, '#a95394', '..'],
  [401, 164, 14, 15, '#8e5669', '..'],
  [284, 186, 26, 27, '#575175', 'SE...|PR...'],
  [310, 185, 20, 18, '#a7af50', 'P...'],
  [330, 179, 16, 15, '#8a5f8a', '...'],
  [346, 179, 13, 15, '#6f79c0', '..'],
  [310, 203, 20, 17, '#b0628f', 'u...'],
  [310, 220, 20, 19, '#6f79c0', 'R...'],
  [330, 194, 16, 16, '#b58a4b', '...'],
  [346, 194, 13, 16, '#80975d', '..'],
  [330, 210, 16, 14, '#3fa0a0', 'P.'],
  [346, 210, 13, 15, '#c03c44', '..'],
  [330, 224, 16, 15, '#575175', '...'],
  [346, 225, 13, 14, '#c03c44', '..'],
  [284, 213, 26, 26, '#5c8291', 'RE...|Y'],
  [359, 179, 11, 13, '#4a62b2'],
  [370, 179, 11, 13, '#a14b5e'],
  [381, 179, 11, 13, '#8e5669'],
  [392, 179, 12, 13, '#566a95'],
  [404, 179, 11, 13, '#b9c487']
];

// the long tail of accounts fills the lower right corner
const tail = ['#549c7b', '#4a62b2', '#c03c44', '#80975d', '#8e5669', '#3fa0a0', '#a95394', '#e1a553', '#6f79c0', '#b58a4b', '#b9c487', '#a14b5e', '#566a95'];
let ci = 0;
const fillTail = (x, y, w, h, size) => {
  if (w < 2 || h < 2) return;
  const across = w >= h;
  const n = Math.max(1, Math.round((across ? h : w) / size));
  const step = (across ? h : w) / n;
  const depth = Math.min(size, across ? w : h);
  for (let i = 0; i < n; i++) {
    const color = tail[(ci++ * 5 + (ci >> 2)) % tail.length];
    tiles.push(across ? [x, y + i * step, depth, step, color] : [x + i * step, y, step, depth, color]);
  }
  const next = Math.max(3, size * 0.9);
  if (across) fillTail(x + depth, y, w - depth, h, next);
  else fillTail(x, y + depth, w, h - depth, next);
};
fillTail(359, 192, 56, 47, 10);

const pies = [
  { year: 2017, C: '27.34', A: '5.41', G: '2.89', D: '64.36' },
  { year: 2018, C: '27.86', A: '5.60', G: '3.50', D: '63.04' },
  { year: 2019, C: '26.72', A: '4.82', G: '3.02', D: '65.44' }
];
const pieLabels = [
  { key: 'C', x: 143, y: 23, w: 42, color: '#5470a8' },
  { key: 'A', x: 148, y: 37, w: 37, color: '#8e5669' },
  { key: 'G', x: 147, y: 48, w: 38, color: '#c79a52' },
  { key: 'D', x: 58, y: 66, w: 42, color: '#555064' }
];
const pieColors = { C: '#4a62b2', A: '#8e4a5a', G: '#e1a553', D: '#575175' };
const pieSlices = p => {
  let a = -17 - p.C * 3.6;
  return ['C', 'A', 'G', 'D'].map(k => {
    const b = a + p[k] * 3.6;
    const pt = deg => `${121.5 + 18.5 * Math.cos(deg * Math.PI / 180)} ${51 + 18.5 * Math.sin(deg * Math.PI / 180)}`;
    const d = `M121.5 51L${pt(a)}A18.5 18.5 0 ${b - a > 180 ? 1 : 0} 1 ${pt(b)}z`;
    a = b;
    return { d, color: pieColors[k] };
  });
};

const comboLegend = [
  { x: 160, color: '#5c8089', text: 'Importe_Cargo (Recuento)' },
  { x: 268, color: '#c3423f', text: 'Importe_Cargo (Suma)' },
  { x: 364, color: '#cfc4a3', text: 'Importe_Cargo (Promedio)' }
];
const users = [
  { name: 'BETOLOPEZ', bar: 10, cy: 194, r: 6 }, { name: 'HZETUNA', bar: 53, cy: 194, r: 6 },
  { name: 'JDLOPEZ', bar: 157, cy: 171, r: 7 }, { name: 'JGURROLA', bar: 1, cy: 182, r: 7 },
  { name: 'JUANITO', bar: 8, cy: 207, r: 4 }, { name: 'KORIMA', bar: 0, cy: 186, r: 6 },
  { name: 'PHERRERA', bar: 0, cy: 207, r: 4 }, { name: 'RCASTANEDA', bar: 17, cy: 58, r: 0 },
  { name: 'RIGRESA', bar: 4, cy: 209, r: 3 }, { name: 'SILVIATER', bar: 5, cy: 207, r: 3 },
  { name: 'VGONZALEZ', bar: 0, cy: 205, r: 5 }
];

const cursors = [[27, 6], [15, 12], [7, 20], [5, 24], [18, 28], [66, 31], [142, 31]];

// icon key or label, background, text color, running
const apps = [
  ['win'], ['search'], ['folder'], ['edge'], ['chrome'], ['C', '#e8543c', '#fff', true], ['S', '#e8543c', '#fff'],
  ['whatsapp'], ['skype', '', '', true], ['code'], ['mail', '', '', true], ['word', '', '', true],
  ['ppt', '', '', true], ['excel'], ['aav-e', '#fff', '#333'], ['toolsapp'], ['server'], ['panda'], ['mysql'],
  ['G', '#1277ae', '#fff', true], ['Au', '#d8413f', '#fff'], ['vs'], ['En', '#9e2a4b', '#fff'],
  ['Ai', '#2e0d05', '#f79a22'], ['apa', '', '', true]
];
</script>

<style>
body {
  margin: 0;
}
</style>

<style scoped>
.app {
  position: relative;
  display: flex;
  flex-direction: column;
  height: 100vh;
  overflow: hidden;
  background: #f0f0f0;
  color: #505050;
  font-family: "DejaVu Sans Condensed", "Noto Sans", sans-serif;
  font-size: 7px;
  line-height: 9px;
}

button {
  font: inherit;
  color: inherit;
  background: none;
  border: 0;
  padding: 0;
  cursor: pointer;
}

svg {
  display: block;
  flex-shrink: 0;
}

h1, h2, h4, h5, ul {
  margin: 0;
  padding: 0;
  font-weight: normal;
}

.titlebar {
  display: flex;
  align-items: center;
  gap: 3px;
  height: 15px;
  padding-left: 5px;
  background: #f9fbfa;
}

.logo {
  width: 11px;
  height: 11px;
}

.win-buttons {
  display: flex;
  gap: 22px;
  margin-left: auto;
  padding-right: 10px;
}

.win-buttons svg {
  width: 10px;
  height: 10px;
}

.quickbar {
  display: flex;
  align-items: center;
  height: 16px;
  padding-left: 3px;
  gap: 6px;
  background: #0f67b5;
}

.quickbar svg {
  width: 10px;
  height: 10px;
}

.context-tab {
  width: 151px;
  margin-left: 279px;
  line-height: 16px;
  text-align: center;
  color: #fff;
  background: #2b9149;
}

.tabs {
  display: flex;
  align-items: center;
  height: 19px;
  padding-left: 9px;
  font-size: 9px;
  line-height: 14px;
}

.file-tab {
  margin-right: 22px;
}

.file-tab svg {
  width: 14px;
  height: 10px;
}

.tab {
  margin-right: 23px;
  border-bottom: 2px solid transparent;
}

.tab.active {
  border-color: #0f67b5;
}

.ribbon {
  display: flex;
  height: 62px;
  border-bottom: 1px solid #d8d8d8;
}

.group {
  display: flex;
  flex-direction: column;
  margin: 1px 0;
  padding: 0 2px;
  border-right: 1px solid #d9d9d9;
}

.group-body {
  display: grid;
  flex: 1;
}

.g-file {
  grid-template-columns: 28px 28px 32px 30px 34px;
}

.g-history {
  grid-template-columns: 36px 32px;
}

.g-insert {
  grid-template-columns: 36px 26px 32px 38px 28px 36px 32px 34px 60px 28px 36px 30px 32px 40px 22px 48px;
}

.g-items {
  grid-template-columns: 32px 28px 36px 60px;
}

.g-board {
  grid-template-columns: 30px 28px 32px 40px 100px;
}

.g-cpa {
  grid-template-columns: 64px;
}

.group-name {
  text-align: center;
  line-height: 9px;
}

.big {
  display: flex;
  flex-direction: column;
  align-items: center;
  justify-content: flex-start;
  min-width: 0;
  padding-top: 3px;
}

.big > svg:first-child {
  width: 20px;
  height: 20px;
  margin-bottom: 5px;
}

.big span {
  white-space: pre;
}

.chev {
  width: 6px;
  height: 4px;
}

span .chev {
  display: inline-block;
  vertical-align: middle;
}

.off {
  color: #999;
}

.small-list {
  display: flex;
  flex-direction: column;
}

.small {
  display: flex;
  align-items: center;
  gap: 3px;
  height: 16px;
  padding-left: 2px;
  white-space: nowrap;
}

.small svg {
  width: 11px;
  height: 11px;
}

.pressed {
  background: #c8c8c8;
}

.collapse {
  align-self: flex-end;
  margin: 0 3px 4px auto;
}

.collapse svg {
  width: 8px;
  height: 6px;
}

.work {
  display: flex;
  flex: 1;
  min-height: 0;
}

.source {
  display: flex;
  flex-direction: column;
  flex: 0 0 133px;
}

.source label {
  margin: 6px 8px 2px;
}

.select-box {
  position: relative;
  margin: 0 8px;
}

.select-box select {
  display: block;
  appearance: none;
  width: 100%;
  height: 14px;
  padding: 0 1px;
  border: 1px solid #b4b4b4;
  border-radius: 0;
  background: #fff;
  color: inherit;
  font: inherit;
}

.select-box svg {
  position: absolute;
  right: 3px;
  top: 5px;
  width: 6px;
  height: 4px;
}

.tree-tools {
  display: flex;
  margin: 8px 3px 3px;
}

.tree-tools button {
  padding: 2px 3px;
}

.tree-tools svg {
  width: 11px;
  height: 12px;
}

.tree-tools .on {
  background: #cdcdcd;
}

.tree {
  flex: 1;
  background: #fff;
}

.tree ul {
  display: grid;
  height: 191px;
  grid-auto-rows: 1fr;
  list-style: none;
}

.tree li {
  display: flex;
  align-items: center;
  padding-left: 24px;
}

.tree .root {
  padding-left: 2px;
}

.exp {
  width: 8px;
  height: 6px;
  margin-right: 2px;
}

.field {
  width: 11px;
  height: 10px;
  margin-right: 1px;
}

.tree span {
  flex: 1;
  padding-left: 2px;
  line-height: 14px;
}

.tree .selected span {
  background: #e4e4e4;
}

.bindings {
  flex: 0 0 166px;
}

.card {
  margin: 6px 9px 0 7px;
  padding-bottom: 2px;
  background: #f8f8f8;
}

.card h4,
.card h5 {
  font-size: 7px;
  font-weight: bold;
  line-height: 13px;
}

.card h5 {
  margin: 7px 0 2px;
}

.card .measures {
  margin-top: 11px;
}

.slot {
  position: relative;
  display: block;
  width: calc(100% - 6px);
  height: 18px;
  margin-left: 3px;
  border: 1px solid #ececec;
}

.slot.filled {
  border-color: #d5d5d5;
  background: #f0f0f0;
}

.slot svg {
  position: absolute;
  left: 5px;
  top: 4px;
  width: 6px;
  height: 8px;
}

.card hr {
  margin: 13px 0 10px;
  border: 0;
  border-top: 1px solid #ccc;
}

.dashboard {
  display: flex;
  flex-direction: column;
  flex: 1;
  min-width: 0;
  border-left: 1px solid #ccc;
}

.dash-title {
  display: flex;
  align-items: center;
  height: 26px;
  padding-right: 8px;
  border-bottom: 1px solid #d0d0d0;
}

.dash-title h1 {
  margin-left: auto;
  font-size: 13px;
  line-height: 16px;
  color: #444;
}

.funnel {
  width: 7px;
  height: 7px;
  margin: 0 37% 6px 4px;
}

.row {
  display: grid;
  flex: 1 1 0;
  min-height: 0;
  gap: 1px;
  padding-bottom: 1px;
  background: #cfcfcf;
}

.row.top {
  flex-grow: 273;
  grid-template-columns: 243fr 303fr 432fr;
}

.row.bottom {
  flex-grow: 276;
  grid-template-columns: 243fr 244fr 491fr;
}

.panel {
  display: flex;
  flex-direction: column;
  min-width: 0;
  min-height: 0;
  background: #fff;
}

.panel-head {
  display: flex;
  align-items: center;
  gap: 7px;
  flex: 0 0 26px;
  padding: 0 8px 0 7px;
}

.panel-head h2 {
  flex: 1;
  font-size: 12px;
  line-height: 16px;
  white-space: nowrap;
  color: #2171ae;
}

.tool svg {
  width: 11px;
  height: 11px;
}

.chart {
  flex: 1;
  width: 100%;
  min-height: 0;
  fill: #606060;
  font-size: 7px;
}

.axis {
  font-size: 11px;
}

.pie-title {
  font-size: 11px;
  fill: #777;
}

.treemap {
  flex: 1;
  min-height: 0;
  margin: 0 8px 7px;
  font-size: 7px;
  font-weight: bold;
}

.treemap text {
  fill: #fff;
  stroke: #333;
  stroke-opacity: .55;
  stroke-width: 2px;
  paint-order: stroke;
}

.grid-wrap {
  display: flex;
  flex: 1;
  min-height: 0;
  overflow: hidden;
}

table {
  flex: 1;
  min-width: 0;
  table-layout: fixed;
  border-collapse: separate;
  border-spacing: 0;
}

th,
td {
  box-sizing: border-box;
  overflow: hidden;
  white-space: nowrap;
  text-align: left;
  font-weight: normal;
}

.pivot {
  height: 100%;
}

.pivot th {
  height: 15px;
  padding: 0 2px;
  border-top: 1px solid #d8d8d8;
  border-right: 1px solid #d0d0d0;
  background: #f8f8f8;
  color: #777;
}

.pivot .corner {
  background: #efefef;
}

.c-name {
  width: 66px;
}

.c-num {
  width: 67px;
}

.pivot td {
  padding: 0;
}

.pivot .name {
  padding-left: 6px;
  border-top: 1px solid #ccc;
  border-right: 1px solid #ccc;
  background: #f8f8f8;
  color: #777;
  white-space: pre;
}

.name svg {
  display: inline-block;
  width: 5px;
  height: 8px;
  margin-right: 5px;
  vertical-align: middle;
}

.pivot .num {
  padding-right: 2px;
  border-top: 1px solid #c6d8cc;
  border-right: 1px solid #c3d5c8;
  background: #d8e9dd;
  text-align: right;
}

.scroll {
  display: flex;
  flex-direction: column;
  flex: 0 0 10px;
  margin-top: 31px;
  background: #f0f0f0;
}

.scroll.from-head {
  margin-top: 17px;
}

.scroll i {
  display: grid;
  place-items: center;
  height: 9px;
  border: 1px solid #ccc;
  background: #fff;
}

.scroll i::after {
  content: "";
  border: 2px solid transparent;
  border-top: 0;
  border-bottom-color: #666;
}

.scroll .down {
  margin-top: auto;
}

.scroll .down::after {
  transform: rotate(180deg);
}

.scroll b {
  height: 20px;
  border: 1px solid #ccc;
  border-top: 0;
  background: #fff;
}

.scroll .long {
  height: 57%;
}

.c-id {
  width: 31px;
}

.c-diff {
  width: 54px;
}

.budget th {
  height: 17px;
  padding: 0 2px;
  border-top: 1px solid #d8d8d8;
  border-bottom: 1px solid #c8c8c8;
  border-right: 1px solid #c8c8c8;
  background: #f8f8f8;
  color: #777;
}

.budget td {
  height: 14px;
  padding: 0 2px;
  border-bottom: 1px solid #e4e4e4;
  border-right: 1px solid #d8d8d8;
}

.cell {
  display: flex;
  justify-content: space-between;
}

.budget .diff {
  padding-right: 16px;
  text-align: right;
  position: relative;
}

.diff i {
  position: absolute;
  right: 3px;
  top: 3px;
  border: 5px solid transparent;
  border-width: 0 5px;
}

.bad {
  color: #c8404a;
}

.bad i {
  border-bottom: 7px solid #cf3b3b;
}

.good {
  color: #2b9149;
}

.good i {
  border-top: 7px solid #23884a;
}

.taskbar {
  display: grid;
  grid-template-columns: 721fr 279fr;
  align-items: center;
  height: 32px;
  padding-left: 280px;
  background: linear-gradient(90deg, #d9dbe9, #eed6df 50%, #e6d3df);
}

.apps {
  display: flex;
  justify-content: space-between;
}

.apps button {
  padding-bottom: 2px;
  border-bottom: 1px solid transparent;
}

.apps .running {
  border-image: linear-gradient(90deg, transparent 35%, #777 35% 65%, transparent 65%) 1;
}

.apps svg {
  width: 16px;
  height: 16px;
  overflow: visible;
}

.tray {
  display: flex;
  align-items: center;
  justify-content: flex-end;
  gap: 9px;
  padding-right: 12px;
}

.tray svg {
  width: 9px;
  height: 9px;
}

.tray .moon {
  width: 11px;
  height: 11px;
}

.tray time {
  color: #333;
  font-size: 8px;
  line-height: 10px;
  text-align: right;
}

.listbox {
  position: absolute;
  right: 49px;
  bottom: 0;
  box-sizing: border-box;
  width: 247px;
  height: 246px;
  padding: 0 6px;
  border: 1px solid #7fabd0;
  border-bottom: 0;
  background: rgba(255, 255, 255, .85);
}

.listbox .panel-head {
  height: 25px;
  padding: 0 1px;
}

.listbox label {
  display: flex;
  align-items: center;
  gap: 4px;
  height: 13px;
  padding-left: 1px;
}

.listbox .current {
  height: 11px;
  border: 1px solid #8fb6da;
  padding-left: 0;
  background: linear-gradient(90deg, #c6def2, #dcebf8);
}

.listbox input {
  appearance: none;
  width: 9px;
  height: 9px;
  margin: 0;
  border: 1px solid #bbb;
  background: #fff;
}

.listbox input:checked {
  background: #fff url("data:image/svg+xml,%3Csvg xmlns='http://www.w3.org/2000/svg' viewBox='0 0 7 7'%3E%3Cpath d='M1 3l2 2 3-3' fill='none' stroke='%23888'/%3E%3C/svg%3E") center / 7px no-repeat;
}

.pointer-trail {
  position: absolute;
  right: 190px;
  bottom: 185px;
  width: 240px;
  height: 90px;
  overflow: visible;
  pointer-events: none;
}
</style>
